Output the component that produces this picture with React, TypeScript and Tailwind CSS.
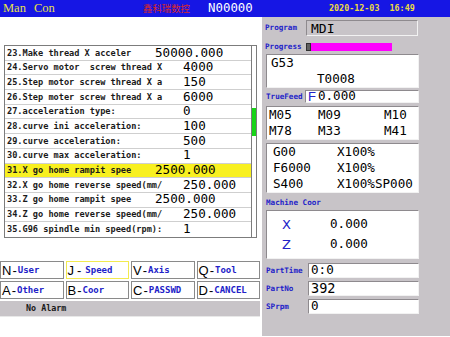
import React from "react";

const mono = "font-['DejaVu_Sans_Mono',monospace]";
const lbl = "font-['DejaVu_Sans_Mono',monospace] font-bold text-[7.6px] leading-none text-[#2222c8] whitespace-nowrap";
const btnLbl = "font-['DejaVu_Sans_Mono',monospace] font-bold text-[9px] leading-none text-[#2222c8] whitespace-nowrap";
const big = "font-['DejaVu_Sans_Mono',monospace] text-[12.6px] leading-none text-black whitespace-pre";
const inset = "border border-t-[#8e8a8e] border-l-[#8e8a8e] border-b-[#f2f2f2] border-r-[#f2f2f2]";

const rows: [string, string, boolean, boolean][] = [
  ["23.Make thread X acceler", "50000.000", false, false],
  ["24.Servo motor  screw thread X", "4000", true, false],
  ["25.Step motor screw thread X a", "150", true, false],
  ["26.Step moter screw thread X a", "6000", true, false],
  ["27.acceleration type:", "0", true, false],
  ["28.curve ini acceleration:", "100", true, false],
  ["29.curve acceleration:", "500", true, false],
  ["30.curve max acceleration:", "1", true, false],
  ["31.X go home rampit spee", "2500.000", false, true],
  ["32.X go home reverse speed(mm/", "250.000", true, false],
  ["33.Z go home rampit spee", "2500.000", false, false],
  ["34.Z go home reverse speed(mm/", "250.000", true, false],
  ["35.G96 spindle min speed(rpm):", "1", true, false],
];

function Btn({ k, label, sel }: { k: string; label: string; sel?: boolean }) {
  return (
    <div
      className={
        "h-[18px] flex items-center bg-white border " +
        (sel ? "border-[#f2ea50]" : "border-[#8a8a8a]")
      }
    >
      <span className="ml-[1px] font-['Liberation_Sans',sans-serif] text-[13px] leading-none text-black">{k}</span>
      {sel ? (
        <span className="ml-[3px] mr-[4px] font-['Liberation_Sans',sans-serif] text-[13px] leading-none text-black">-</span>
      ) : (
        <span className="ml-[1px] mr-[1px] font-['Liberation_Sans',sans-serif] text-[13px] leading-none text-black">-</span>
      )}
      <span className={btnLbl}>{label}</span>
    </div>
  );
}

export default function App() {
  return (
    <div className="w-[450px] h-[337px] bg-white overflow-hidden flex flex-col">
      {/* top bar */}
      <div className="h-[17px] bg-[#1616e4] flex items-center shrink-0">
        <div className="w-[143px] pl-[3px] flex items-center font-['Liberation_Serif',serif] text-[12.5px] leading-none text-[#e8e048]">
          <span>Man</span>
          <span className="ml-[8px]">Con</span>
        </div>
        <div className="w-[65px] font-['Noto_Sans_CJK_SC',sans-serif] text-[9.4px] leading-none text-[#d82828]">鑫科瑞数控</div>
        <div className={mono + " w-[121px] text-[12.4px] leading-none text-white"}>N00000</div>
        <div className={mono + " font-bold text-[8.4px] leading-none text-[#ecdc40] whitespace-pre"}>2020-12-03  16:49</div>
      </div>

      <div className="flex h-[319px]">
        {/* left */}
        <div className="w-[262px] flex flex-col">
          <div className="h-[28px]" />
          <div className="ml-[4px] w-[253px] h-[193px] flex border border-[#7c7c7c]">
            <div className="w-[246px] flex flex-col">
              {rows.map(([l, v, off, hl], i) => (
                <div
                  key={i}
                  className={
                    "h-[14.75px] flex items-center " +
                    (i < rows.length - 1 ? "border-b border-[#cfcfcf] " : "") +
                    (hl ? "bg-[#f8f020]" : "bg-white")
                  }
                >
                  <div className={mono + " w-[150px] shrink-0 pl-[2px] font-bold text-[8.6px] leading-none text-[#1a1a1a] whitespace-pre"}>{l}</div>
                  <div className={big + (off ? " pl-[28px]" : " pl-0")}>{v}</div>
                </div>
              ))}
            </div>
            <div className="flex-1 border-l border-[#7c7c7c] flex flex-col">
              <div className="h-[62px]" />
              <div className="h-[28px] bg-[#18d418]" />
            </div>
          </div>
          <div className="mt-[23px] w-[260px] grid grid-cols-4 gap-x-[2px] gap-y-[2px]">
            <Btn k="N" label="User" />
            <Btn k="J" label="Speed" sel />
            <Btn k="V" label="Axis" />
            <Btn k="Q" label="Tool" />
            <Btn k="A" label="Other" />
            <Btn k="B" label="Coor" />
            <Btn k="C" label="PASSWD" />
            <Btn k="D" label="CANCEL" />
          </div>
          <div className="mt-[2px] w-[260px] h-[16px] bg-[#c8c4c8] border-b border-[#e8e8e8] flex items-center pl-[26px]">
            <span className={mono + " font-bold text-[8.4px] leading-none text-[#1a1a1a]"}>No Alarm</span>
          </div>
        </div>

        {/* right */}
        <div className="flex-1 bg-[#c8c4c8] flex flex-col pl-[4px] pr-[31px]">
          {/* Program */}
          <div className="mt-[3px] h-[16px] flex items-center">
            <div className={lbl + " w-[41px] -ml-[1px]"}>Program</div>
            <div className={"h-[16px] w-[112px] flex items-center pl-[4px] bg-[#c8c4c8] " + inset}>
              <span className={big + " text-[13px]"}>MDI</span>
            </div>
          </div>
          {/* Progress */}
          <div className="mt-[6px] h-[9px] flex items-center">
            <div className={lbl + " w-[41px] -ml-[1px]"}>Progress</div>
            <div className="h-[8px] w-[5px] border border-[#303030] bg-[#606060]" />
            <div className="h-[8px] w-[81px] bg-[#ff00ff]" />
          </div>
          {/* G53 box */}
          <div className={"mt-[3px] h-[34px] bg-white flex flex-col " + inset}>
            <div className="h-[16px] flex items-center pl-[4px]">
              <span className={big}>G53</span>
            </div>
            <div className="h-[16px] flex items-center pl-[50px]">
              <span className={big}>T0008</span>
            </div>
          </div>
          {/* TrueFeed */}
          <div className="mt-[2px] h-[13px] flex items-center">
            <div className={lbl + " w-[39px]"}>TrueFeed</div>
            <div className={"h-[13px] flex-1 bg-white flex items-center pl-[2px] " + inset}>
              <span className="font-['Liberation_Sans',sans-serif] text-[13px] leading-none text-[#2222c8]">F</span>
              <span className={big + " ml-[2px]"}>0.000</span>
            </div>
          </div>
          {/* M box */}
          <div className={"mt-[3px] h-[34px] bg-white flex flex-col " + inset}>
            <div className="h-[16px] flex items-center pl-[2px]">
              <span className={big + " w-[49px]"}>M05</span>
              <span className={big + " w-[66px]"}>M09</span>
              <span className={big}>M10</span>
            </div>
            <div className="h-[16px] flex items-center pl-[2px]">
              <span className={big + " w-[49px]"}>M78</span>
              <span className={big + " w-[66px]"}>M33</span>
              <span className={big}>M41</span>
            </div>
          </div>
          {/* G00 box */}
          <div className={"mt-[3px] h-[50px] bg-white flex flex-col justify-center " + inset}>
            <div className="h-[16px] flex items-center pl-[6px]">
              <span className={big + " w-[64px]"}>G00</span>
              <span className={big}>X100%</span>
            </div>
            <div className="h-[16px] flex items-center pl-[6px]">
              <span className={big + " w-[64px]"}>F6000</span>
              <span className={big}>X100%</span>
            </div>
            <div className="h-[16px] flex items-center pl-[6px]">
              <span className={big + " w-[64px]"}>S400</span>
              <span className={big}>X100%SP000</span>
            </div>
          </div>
          {/* Machine Coor */}
          <div className="mt-[5px] h-[10px] flex items-center">
            <span className={lbl}>Machine Coor</span>
          </div>
          <div className={"mt-[2px] h-[49px] bg-white flex flex-col justify-center " + inset}>
            <div className="h-[20px] flex items-center pl-[15px]">
              <span className="w-[48px] font-['DejaVu_Sans',sans-serif] text-[13px] leading-none text-[#2222c8]">X</span>
              <span className={big}>0.000</span>
            </div>
            <div className="h-[20px] flex items-center pl-[15px]">
              <span className="w-[48px] font-['DejaVu_Sans',sans-serif] text-[13px] leading-none text-[#2222c8]">Z</span>
              <span className={big}>0.000</span>
            </div>
          </div>
          {/* Part rows */}
          <div className="mt-[4px] h-[15px] flex items-center">
            <div className={lbl + " w-[42px]"}>PartTime</div>
            <div className={"h-[15px] flex-1 bg-white flex items-center pl-[2px] " + inset}>
              <span className={big}>0:0</span>
            </div>
          </div>
          <div className="mt-[3px] h-[15px] flex items-center">
            <div className={lbl + " w-[42px]"}>PartNo</div>
            <div className={"h-[15px] flex-1 bg-white flex items-center pl-[2px] " + inset}>
              <span className={big + " text-[13.5px]"}>392</span>
            </div>
          </div>
          <div className="mt-[3px] h-[15px] flex items-center">
            <div className={lbl + " w-[42px]"}>SPrpm</div>
            <div className={"h-[15px] flex-1 bg-white flex items-center pl-[2px] " + inset}>
              <span className={big}>0</span>
            </div>
          </div>
        </div>
      </div>
    </div>
  );
}
